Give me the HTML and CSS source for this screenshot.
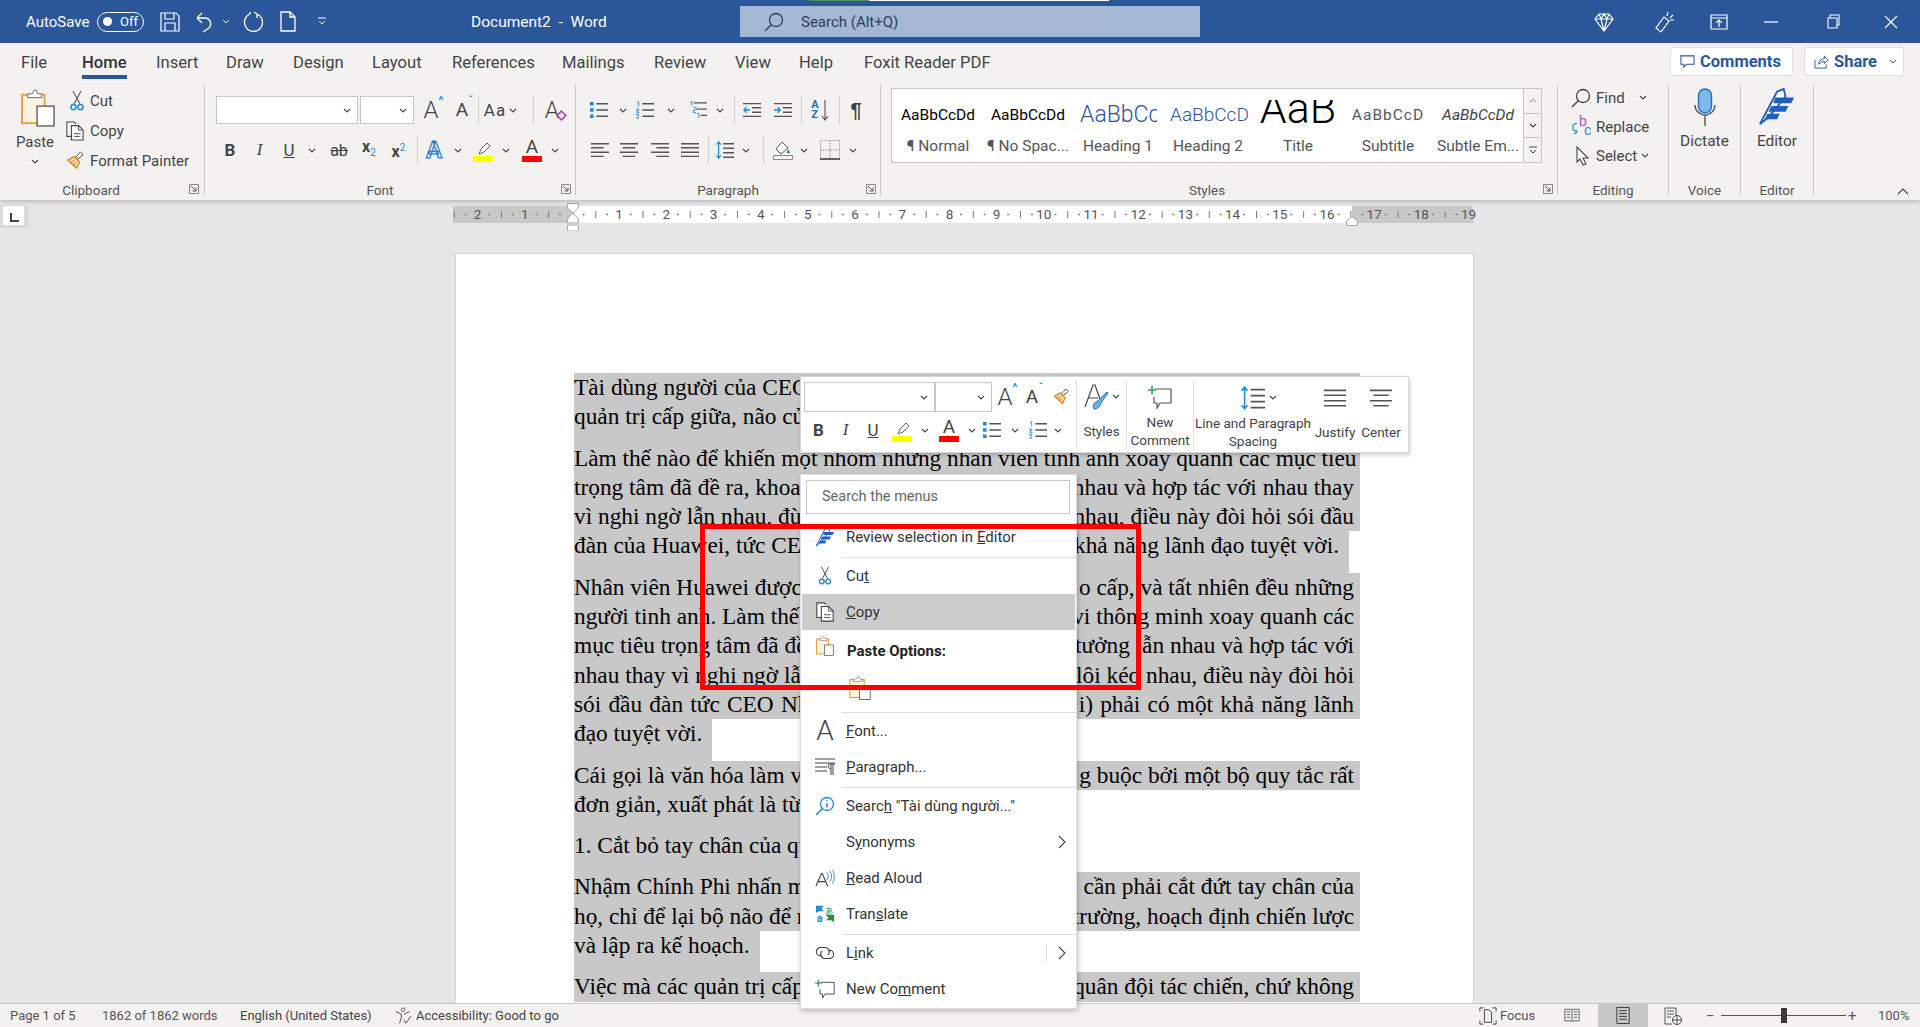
FILE: index.html
```html
<!DOCTYPE html>
<html lang="vi">
<head>
    <meta charset="UTF-8">
    <title>Document2 - Word</title>
    <link rel="stylesheet" href="styles.css">
</head>
<body>
<svg class="sprite" width="0" height="0">
    <symbol id="chev" viewBox="0 0 8 5"><path d="M1 1l3 3 3-3" fill="none" stroke="#444" stroke-width="1.1"/></symbol>
    <symbol id="cut" viewBox="0 0 14 22"><path d="M3 1l7 13M11 1L4 14" fill="none" stroke="#555" stroke-width="1.1"/><circle cx="3.5" cy="17" r="2.6" fill="none" stroke="#2b88c8" stroke-width="1.5"/><circle cx="10.5" cy="17" r="2.6" fill="none" stroke="#2b88c8" stroke-width="1.5"/></symbol>
    <symbol id="copy" viewBox="0 0 20 22"><path d="M7 17H1V1h8l2 2" fill="#fff" stroke="#444" stroke-width="1.2"/><path d="M6 5h8l5 5v11H6z" fill="#fff" stroke="#444" stroke-width="1.2"/><path d="M14 5v5h5M9 14h7M9 17h7" fill="none" stroke="#444"/></symbol>
    <symbol id="painter" viewBox="0 0 20 22"><path d="M11 7l5-6 3 3-6 5z" fill="#fff" stroke="#444"/><path d="M9 6l6 6-3 7-10-9z" fill="#f7d9a8" stroke="#e07b1a" stroke-width="1.4"/><path d="M5 13l4-3M8 16l3-4" stroke="#e07b1a"/></symbol>
    <symbol id="paste" viewBox="0 0 36 40"><rect x="1" y="6" width="24" height="30" fill="#fdf3e0" stroke="#e8a23c" stroke-width="2"/><path d="M7 9V5h5l2-4h2l2 4h4v4z" fill="#fff" stroke="#666"/><rect x="17" y="18" width="18" height="21" fill="#fff" stroke="#555" stroke-width="1.4"/></symbol>
    <symbol id="bullets" viewBox="0 0 20 20"><path d="M7 3h13M7 10h13M7 17h13" stroke="#555" stroke-width="1.6"/><path d="M0 1h4v4H0zM0 8h4v4H0zM0 15h4v4H0z" fill="#1f8ad2"/></symbol>
    <symbol id="numbers" viewBox="0 0 20 20"><path d="M7 3h13M7 10h13M7 17h13" stroke="#555" stroke-width="1.6"/><path d="M1 1h2v5M0 9h3v2H1v2h3M0 15h3l-1 2 1 2H0" fill="none" stroke="#1f8ad2"/></symbol>
    <symbol id="multi" viewBox="0 0 20 20"><path d="M5 2h15M9 9h11M13 16h7" stroke="#555" stroke-width="1.5"/><path d="M1 0h2v5M5 7h3v3H5v3h3M9 14h2v5" fill="none" stroke="#1f8ad2"/></symbol>
    <symbol id="outdent" viewBox="0 0 20 16"><path d="M0 1h20M10 5.500h10M10 10.500h10M0 15h20" stroke="#555" stroke-width="1.4"/><path d="M8 8H1m3-3L1 8l3 3" fill="none" stroke="#1f8ad2" stroke-width="1.4"/></symbol>
    <symbol id="indent" viewBox="0 0 20 16"><path d="M0 1h20M10 5.500h10M10 10.500h10M0 15h20" stroke="#555" stroke-width="1.4"/><path d="M0 8h7M4 5l3 3-3 3" fill="none" stroke="#1f8ad2" stroke-width="1.4"/></symbol>
    <symbol id="a-left" viewBox="0 0 20 16"><path d="M0 1h20M0 5.500h14M0 10.500h20M0 15h14" stroke="#555" stroke-width="1.5"/></symbol>
    <symbol id="a-center" viewBox="0 0 20 16"><path d="M0 1h20M3 5.500h14M0 10.500h20M3 15h14" stroke="#555" stroke-width="1.5"/></symbol>
    <symbol id="a-right" viewBox="0 0 20 16"><path d="M0 1h20M6 5.500h14M0 10.500h20M6 15h14" stroke="#555" stroke-width="1.5"/></symbol>
    <symbol id="a-just" viewBox="0 0 20 16"><path d="M0 1h20M0 5.500h20M0 10.500h20M0 15h20" stroke="#555" stroke-width="1.5"/></symbol>
    <symbol id="spacing" viewBox="0 0 20 20"><path d="M8 3h12M8 8h12M8 13h12M8 18h12" stroke="#555" stroke-width="1.5"/><path d="M3 1v18M0.500 4L3 1l2.500 3M0.500 16L3 19l2.500-3" fill="none" stroke="#1f8ad2" stroke-width="1.3"/></symbol>
    <symbol id="comment" viewBox="0 0 24 24"><path d="M7 4h16v14H12l-3 5v-5H6v-6" fill="none" stroke="#555" stroke-width="1.2"/><path d="M4 1v8M0 5h8" stroke="#2ba14a" stroke-width="1.6"/></symbol>
    <symbol id="search" viewBox="0 0 20 20"><circle cx="12" cy="8" r="6.500" fill="none" stroke="currentColor" stroke-width="1.3"/><path d="M7.500 12.500L1 19" stroke="currentColor" stroke-width="1.5"/></symbol>
    <symbol id="launch" viewBox="0 0 10 10"><path d="M.5.500h9v9h-9z" fill="none" stroke="#888"/><path d="M2 2l5 5M7 3.500V7H3.500" fill="none" stroke="#555"/></symbol>
    <symbol id="quill" viewBox="0 0 40 40"><path d="M2 38L20 4l7-3 2 8-18 22z" fill="#fff" stroke="#1f5fbf" stroke-width="2"/><path d="M18 10h20l-3 6H16zM14 19h18l-3 6H11zM10 27h13l-3 6H7z" fill="#1f5fbf"/></symbol>
</svg>

<div class="app">
    <div class="titlebar">
        <div class="progress"></div>
        <div class="tb-left">
            <span class="autosave">AutoSave</span>
            <span class="toggle"><i></i><b>Off</b></span>
            <svg class="qa-save" viewBox="0 0 20 20"><path d="M1 1h15l3 3v15H1zM5 1v6h9V1M5 19v-8h10v8" fill="none" stroke="#fff" stroke-width="1.2"/></svg>
            <svg class="qa-undo" viewBox="0 0 18 22"><path d="M1 7h9a6 6 0 0 1 3 10l-6 4M1 7l5-5M1 7l5 5" fill="none" stroke="#fff" stroke-width="1.3"/></svg>
            <svg class="qa-chev" viewBox="0 0 8 5"><path d="M1 1l3 3 3-3" fill="none" stroke="#fff"/></svg>
            <svg class="qa-redo" viewBox="0 0 20 20"><path d="M7 2a9 9 0 1 0 7 0M7 2V0M14 2l-3-2M14 2v4" fill="none" stroke="#fff" stroke-width="1.3"/></svg>
            <svg class="qa-new" viewBox="0 0 16 21"><path d="M1 1h9l5 5v14H1zM10 1v5h5" fill="none" stroke="#fff" stroke-width="1.3"/></svg>
            <svg class="qa-more" viewBox="0 0 10 9"><path d="M1 1h8M2 4l3 3 3-3" fill="none" stroke="#fff"/></svg>
            <span class="doc-title">Document2 &nbsp;-&nbsp; Word</span>
        </div>
        <div class="tb-search">
            <svg class="ic-search" viewBox="0 0 20 20"><use href="#search"/></svg>
            <span>Search (Alt+Q)</span>
        </div>
        <div class="tb-right">
            <svg class="tr-gem" viewBox="0 0 20 20"><path d="M5 2h10l4 5-9 12L1 7zM1 7h18M7 7l3 12 3-12M5 2l2 5 3-5 3 5 2-5" fill="none" stroke="#fff" stroke-width="1.2"/></svg>
            <svg class="tr-idea" viewBox="0 0 20 22"><path d="M10 6l5 4-8 11-5-4zM14 1l-1 4M19 4l-3 3M20 9l-4 0" fill="none" stroke="#fff" stroke-width="1.2"/></svg>
            <svg class="tr-disp" viewBox="0 0 18 16"><path d="M1 1h16v14H1zM1 4h16M9 13V7M6 9l3-3 3 3" fill="none" stroke="#fff" stroke-width="1.2"/></svg>
            <svg class="tr-min" viewBox="0 0 14 2"><path d="M0 1h14" stroke="#fff" stroke-width="1.2"/></svg>
            <svg class="tr-max" viewBox="0 0 13 15"><path d="M1 4h9v10H1zM3 4V1h9v10h-2" fill="none" stroke="#fff" stroke-width="1.1"/></svg>
            <svg class="tr-close" viewBox="0 0 14 14"><path d="M1 1l12 12M13 1L1 13" stroke="#fff" stroke-width="1.2"/></svg>
        </div>
    </div>

    <div class="tabs">
        <span>File</span><span class="active">Home</span><span>Insert</span><span>Draw</span><span>Design</span><span>Layout</span><span>References</span><span>Mailings</span><span>Review</span><span>View</span><span>Help</span><span>Foxit Reader PDF</span>
        <div class="tab-actions">
            <button class="pill pill-comments"><svg viewBox="0 0 16 16"><path d="M1 2h14v9H7l-3 3v-3H1z" fill="none" stroke="#2b579a" stroke-width="1.1"/></svg>Comments</button>
            <button class="pill pill-share"><svg viewBox="0 0 16 16"><path d="M1 6v9h12v-4M5 11c0-4 3-6 6-6V2l4 4.500L11 10V8c-2 0-4 1-6 3z" fill="none" stroke="#2b579a" stroke-width="1"/></svg>Share<svg class="pill-chev" viewBox="0 0 8 5"><path d="M1 1l3 3 3-3" fill="none" stroke="#2b579a"/></svg></button>
        </div>
    </div>

    <div class="ribbon">
        <div class="group g-clip">
            <div class="clip-row">
                <div class="paste-btn">
                    <svg class="paste-ic"><use href="#paste"/></svg>
                    <span>Paste</span>
                    <svg class="chev"><use href="#chev"/></svg>
                </div>
                <div class="clip-list">
                    <div><svg class="ci ci-cut"><use href="#cut"/></svg>Cut</div>
                    <div><svg class="ci ci-copy"><use href="#copy"/></svg>Copy</div>
                    <div><svg class="ci ci-copy"><use href="#painter"/></svg>Format Painter</div>
                </div>
            </div>
            <div class="g-label">Clipboard</div>
            <svg class="launch"><use href="#launch"/></svg>
        </div>

        <div class="group g-font">
            <div class="row font-r1">
                <div class="combo combo-name"><svg class="chev"><use href="#chev"/></svg></div>
                <div class="combo combo-size"><svg class="chev"><use href="#chev"/></svg></div>
                <span class="c letter-lg">A<sup class="up">^</sup></span>
                <span class="c letter-md">A<sup class="dn">ˇ</sup></span>
                <i class="sep"></i>
                <span class="c aa">Aa<svg class="chev"><use href="#chev"/></svg></span>
                <i class="sep"></i>
                <span class="c clear">A<svg viewBox="0 0 10 10"><path d="M5 1l4 4-4 4-4-4z" fill="#f1d9f0" stroke="#a23cb0" stroke-width="1.3"/></svg></span>
            </div>
            <div class="row font-r2">
                <span class="c bold">B</span>
                <span class="c ital">I</span>
                <span class="c under">U</span>
                <svg class="chev c"><use href="#chev"/></svg>
                <span class="c strike">ab</span>
                <span class="c subsup">x<sub>2</sub></span>
                <span class="c subsup">x<sup>2</sup></span>
                <i class="sep"></i>
                <span class="c effect">A</span>
                <svg class="chev c"><use href="#chev"/></svg>
                <span class="c swatch"><svg viewBox="0 0 20 14"><path d="M6 12l2-5 6-6 3 3-6 6z" fill="#fff" stroke="#666"/></svg><b class="yellow"></b></span>
                <svg class="chev c"><use href="#chev"/></svg>
                <span class="c swatch letter">A<b class="red"></b></span>
                <svg class="chev c"><use href="#chev"/></svg>
            </div>
            <div class="g-label">Font</div>
            <svg class="launch"><use href="#launch"/></svg>
        </div>

        <div class="group g-para">
            <div class="row para-r1">
                <svg class="c ic18"><use href="#bullets"/></svg>
                <svg class="chev c"><use href="#chev"/></svg>
                <svg class="c ic18"><use href="#numbers"/></svg>
                <svg class="chev c"><use href="#chev"/></svg>
                <svg class="c ic18"><use href="#multi"/></svg>
                <svg class="chev c"><use href="#chev"/></svg>
                <i class="sep"></i>
                <svg class="c ic18"><use href="#outdent"/></svg>
                <svg class="c ic18"><use href="#indent"/></svg>
                <i class="sep"></i>
                <span class="c sort"><span class="az">A<br>Z</span><svg viewBox="0 0 8 22"><path d="M4 1v20M1 17l3 4 3-4" fill="none" stroke="#555" stroke-width="1.1"/></svg></span>
                <i class="sep"></i>
                <span class="c pil">¶</span>
            </div>
            <div class="row para-r2">
                <svg class="c ic18"><use href="#a-left"/></svg>
                <svg class="c ic18"><use href="#a-center"/></svg>
                <svg class="c ic18"><use href="#a-right"/></svg>
                <svg class="c ic18"><use href="#a-just"/></svg>
                <i class="sep"></i>
                <svg class="c ic18"><use href="#spacing"/></svg>
                <svg class="chev c"><use href="#chev"/></svg>
                <i class="sep"></i>
                <svg class="c shade" viewBox="0 0 20 20"><path d="M3 9l6-7 6 6-7 6z" fill="#fff" stroke="#555"/><path d="M15 9l2 4h-3z" fill="#1f5f9f"/><path d="M.5 15.500h19v4H.5z" fill="#f7f7f7" stroke="#888"/></svg>
                <svg class="chev c"><use href="#chev"/></svg>
                <svg class="c shade" viewBox="0 0 20 20"><path d="M.5.500h19v19H.5zM10 1v18M1 10h18" fill="none" stroke="#888" stroke-dasharray="1 1"/><path d="M0 19h20" stroke="#444" stroke-width="1.6"/></svg>
                <svg class="chev c"><use href="#chev"/></svg>
            </div>
            <div class="g-label">Paragraph</div>
            <svg class="launch"><use href="#launch"/></svg>
        </div>

        <div class="group g-styles">
            <div class="gallery">
                <div class="st"><div class="pv pv-n">AaBbCcDd</div><div>¶ Normal</div></div>
                <div class="st"><div class="pv pv-n">AaBbCcDd</div><div>¶ No Spac...</div></div>
                <div class="st"><div class="pv pv-h1">AaBbCcDd</div><div>Heading 1</div></div>
                <div class="st"><div class="pv pv-h2">AaBbCcDd</div><div>Heading 2</div></div>
                <div class="st"><div class="pv pv-t">AaB</div><div>Title</div></div>
                <div class="st"><div class="pv pv-s">AaBbCcD</div><div>Subtitle</div></div>
                <div class="st"><div class="pv pv-e">AaBbCcDd</div><div>Subtle Em...</div></div>
                <div class="scroller">
                    <span><svg class="chev up-c"><use href="#chev"/></svg></span>
                    <span><svg class="chev"><use href="#chev"/></svg></span>
                    <span><svg class="more" viewBox="0 0 10 9"><path d="M1 1h8M2 4l3 3 3-3" fill="none" stroke="#444"/></svg></span>
                </div>
            </div>
            <div class="g-label">Styles</div>
            <svg class="launch"><use href="#launch"/></svg>
        </div>

        <div class="group g-edit">
            <div class="edit-list">
                <div><svg class="ed-ic" viewBox="0 0 20 20"><use href="#search"/></svg>Find<svg class="chev ed-find"><use href="#chev"/></svg></div>
                <div><span class="replace"><b>b</b><i>c</i><svg viewBox="0 0 8 14"><path d="M6 1L2 3v5l4 2M5 8l1 2-3 2" fill="none" stroke="#1f8ad2" stroke-width="1.2"/></svg></span>Replace</div>
                <div><svg class="ed-ic" viewBox="0 0 20 20"><path d="M6 1v15l3-3 3 6 3-1-3-6h5z" fill="#fff" stroke="#444" stroke-width="1.1"/></svg>Select<svg class="chev ed-sel"><use href="#chev"/></svg></div>
            </div>
            <div class="g-label">Editing</div>
        </div>

        <div class="group g-voice">
            <div class="big-btn">
                <svg class="big-ic" viewBox="0 0 28 38"><path d="M4 17a10 10 0 0 0 20 0M14 27v11" fill="none" stroke="#555" stroke-width="1.4"/><rect x="7.500" y="1" width="13" height="24" rx="6.500" fill="#7cb9ea" stroke="#1f6fc0" stroke-width="1.4"/></svg>
                <span>Dictate</span>
            </div>
            <div class="g-label">Voice</div>
        </div>

        <div class="group g-editor">
            <div class="big-btn">
                <svg class="big-ic"><use href="#quill"/></svg>
                <span>Editor</span>
            </div>
            <div class="g-label">Editor</div>
        </div>
        <svg class="collapse" viewBox="0 0 12 7"><path d="M1 6l5-5 5 5" fill="none" stroke="#444" stroke-width="1.1"/></svg>
    </div>

    <div class="doc-area">
        <div class="ruler-row">
            <div class="tab-stop"><span></span></div>
            <div class="ruler">
                <span>2</span><span>1</span><span></span><span>1</span><span>2</span><span>3</span><span>4</span><span>5</span><span>6</span><span>7</span><span>8</span><span>9</span><span>10</span><span>11</span><span>12</span><span>13</span><span>14</span><span>15</span><span>16</span><span>17</span><span>18</span><span>19</span>
                <svg class="mark-l" viewBox="0 0 12 28"><path d="M.5.500h11V5L6 10 .5 5zM6 10l5.500 6v4H.5v-4zM.5 22h11v6H.5z" fill="#fff" stroke="#aaa"/></svg>
                <svg class="mark-r" viewBox="0 0 12 10"><path d="M6 .5l5.500 5v4H.5v-4z" fill="#fff" stroke="#aaa"/></svg>
            </div>
        </div>
        <div class="page">
            <div class="para">
                <div class="ln split"><span>Tài dùng người của CEO Nhậm</span></div>
                <div class="ln split"><span>quản trị cấp giữa, não của</span></div>
                <div class="gap"></div>
            </div>
            <div class="para">
                <div class="ln full">Làm thế nào để khiến một nhóm những nhân viên tinh anh xoay quanh các mục tiêu</div>
                <div class="ln split"><span>trọng tâm đã đề ra, khoan</span><span>nhau và hợp tác với nhau thay</span></div>
                <div class="ln split"><span>vì nghi ngờ lẫn nhau, đừng</span><span>nhau, điều này đòi hỏi sói đầu</span></div>
                <div class="ln split end"><span>đàn của Huawei, tức CEO</span><span>khả năng lãnh đạo tuyệt vời.</span></div>
            </div>
            <div class="para">
                <div class="ln split"><span>Nhân viên Huawei được</span><span>o cấp, và tất nhiên đều những</span></div>
                <div class="ln split"><span>người tinh anh. Làm thế</span><span>vi thông minh xoay quanh các</span></div>
                <div class="ln split"><span>mục tiêu trọng tâm đã đề</span><span>tưởng lẫn nhau và hợp tác với</span></div>
                <div class="ln split"><span>nhau thay vì nghi ngờ lẫn</span><span>lôi kéo nhau, điều này đòi hỏi</span></div>
                <div class="ln split wide"><span>sói đầu đàn tức CEO Nhậm</span><span>i) phải có một khả năng lãnh</span></div>
                <div class="ln short"><span>đạo tuyệt vời.</span></div>
            </div>
            <div class="para">
                <div class="ln split"><span>Cái gọi là văn hóa làm việc</span><span>g buộc bởi một bộ quy tắc rất</span></div>
                <div class="ln short"><span>đơn giản, xuất phát là từ những</span></div>
            </div>
            <div class="para">
                <div class="ln short"><span>1. Cắt bỏ tay chân của quản trị</span></div>
            </div>
            <div class="para">
                <div class="ln split"><span>Nhậm Chính Phi nhấn mạnh</span><span>cần phải cắt đứt tay chân của</span></div>
                <div class="ln split"><span>họ, chỉ để lại bộ não để nhìn</span><span>trường, hoạch định chiến lược</span></div>
                <div class="ln short"><span>và lập ra kế hoạch.</span></div>
            </div>
            <div class="para">
                <div class="ln split"><span>Việc mà các quản trị cấp cao</span><span>quân đội tác chiến, chứ không</span></div>
            </div>
        </div>
    </div>

    <div class="statusbar">
        <span class="s-page">Page 1 of 5</span>
        <span class="s-words">1862 of 1862 words</span>
        <span class="s-lang">English (United States)</span>
        <svg class="s-acc" viewBox="0 0 20 20"><circle cx="9" cy="3" r="2" fill="none" stroke="#555"/><path d="M1 5l6 3v4l-2 6M16 5l-6 3M10 14l2 4 6-8" fill="none" stroke="#555" stroke-width="1.1"/></svg>
        <span class="s-acct">Accessibility: Good to go</span>
        <div class="s-right">
            <svg class="s-focus" viewBox="0 0 20 20"><path d="M1 5V1h4M15 1h4v4M1 15v4h4M15 19h4v-4M6 3h5l3 3v11H6z" fill="none" stroke="#444" stroke-width="1.1"/></svg>
            <span class="s-ftext">Focus</span>
            <svg class="s-read" viewBox="0 0 18 16"><path d="M1 1h7l1 1 1-1h7v13h-7l-1 1-1-1H1zM9 2v12M3 4h4M3 7h4M3 10h4M11 4h4M11 7h4M11 10h4" fill="none" stroke="#555"/></svg>
            <span class="s-print"><svg viewBox="0 0 14 18"><path d="M.5.500h13v17H.5zM3 4h8M3 7h8M3 10h8M3 13h8" fill="none" stroke="#333"/></svg></span>
            <svg class="s-web" viewBox="0 0 18 18"><path d="M8 17H1V1h11v7M3 4h7M3 7h7M3 10h4" fill="none" stroke="#555"/><circle cx="13" cy="13" r="4.500" fill="#fff" stroke="#444"/><path d="M8.500 13h9M13 8.500v9" stroke="#444"/></svg>
            <span class="s-minus">−</span>
            <div class="slider"><i></i></div>
            <span class="s-plus">+</span>
            <span class="s-zoom">100%</span>
        </div>
    </div>

    <!-- floating toolbar -->
    <div class="mini">
        <div class="mini-fmt">
            <div class="mini-r1">
                <div class="combo mc-name"><svg class="chev"><use href="#chev"/></svg></div>
                <div class="combo mc-size"><svg class="chev"><use href="#chev"/></svg></div>
                <span class="c letter-lg">A<sup class="up">^</sup></span>
                <span class="c letter-md">A<sup class="dn">ˇ</sup></span>
                <svg class="c ic18"><use href="#painter"/></svg>
            </div>
            <div class="mini-r2">
                <span class="c bold">B</span>
                <span class="c ital">I</span>
                <span class="c under">U</span>
                <span class="c swatch"><svg viewBox="0 0 20 14"><path d="M6 12l2-5 6-6 3 3-6 6z" fill="#fff" stroke="#666"/></svg><b class="yellow"></b></span>
                <svg class="chev c"><use href="#chev"/></svg>
                <span class="c swatch letter">A<b class="red"></b></span>
                <svg class="chev c"><use href="#chev"/></svg>
                <svg class="c ic18"><use href="#bullets"/></svg>
                <svg class="chev c"><use href="#chev"/></svg>
                <svg class="c ic18"><use href="#numbers"/></svg>
                <svg class="chev c"><use href="#chev"/></svg>
            </div>
        </div>
        <div class="mini-btn mb-styles">
            <div class="mb-ic"><svg class="st-ic" viewBox="0 0 24 28"><path d="M1 24L9 2h2l5 14M5 15h9" fill="none" stroke="#444" stroke-width="1.2"/><path d="M10 26c-2-3 0-7 4-8l9-9 1 1-7 10c-1 4-4 6-7 6z" fill="#6db3e6" stroke="#1f6fc0"/></svg><svg class="chev"><use href="#chev"/></svg></div>
            <span>Styles</span>
        </div>
        <div class="mini-btn mb-comment">
            <div class="mb-ic"><svg class="ic24"><use href="#comment"/></svg></div>
            <span>New<br>Comment</span>
        </div>
        <div class="mini-btn mb-spacing">
            <div class="mb-ic"><svg class="ic24"><use href="#spacing"/></svg><svg class="chev"><use href="#chev"/></svg></div>
            <span>Line and Paragraph<br>Spacing</span>
        </div>
        <div class="mini-btn mb-align">
            <div class="mb-ic"><svg class="ic22"><use href="#a-just"/></svg></div>
            <span>Justify</span>
        </div>
        <div class="mini-btn mb-align">
            <div class="mb-ic"><svg class="ic22"><use href="#a-center"/></svg></div>
            <span>Center</span>
        </div>
    </div>

    <!-- context menu -->
    <div class="menu">
        <div class="menu-search">Search the menus</div>
        <div class="menu-item mi-first"><svg class="mi"><use href="#quill"/></svg><span>Review selection in <u>E</u>ditor</span></div>
        <hr>
        <div class="menu-item"><svg class="mi"><use href="#cut"/></svg><span>Cu<u>t</u></span></div>
        <div class="menu-item hover"><svg class="mi"><use href="#copy"/></svg><span><u>C</u>opy</span></div>
        <div class="menu-item mi-paste"><svg class="mi"><use href="#paste"/></svg><strong>Paste Options:</strong></div>
        <div class="paste-opt"><svg><use href="#paste"/></svg></div>
        <hr>
        <div class="menu-item"><span class="mi mi-font">A</span><span><u>F</u>ont...</span></div>
        <div class="menu-item"><svg class="mi" viewBox="0 0 20 18"><path d="M0 1h20M0 5h20M0 9h12M0 13h12" stroke="#444" stroke-width="1.2"/><path d="M14 6h6M16 6v11M18 6v11M14 6a3 3 0 0 0 2 5" fill="none" stroke="#444"/></svg><span><u>P</u>aragraph...</span></div>
        <hr>
        <div class="menu-item"><svg class="mi" viewBox="0 0 20 20"><circle cx="12" cy="8" r="6.500" fill="none" stroke="#1f8ad2" stroke-width="1.3"/><path d="M7.500 12.500L1 19" stroke="#1f8ad2" stroke-width="1.6"/><path d="M12 4v1M12 7v4.500" stroke="#1f6fc0" stroke-width="1.3"/></svg><span>Searc<u>h</u> "Tài dùng người..."</span></div>
        <div class="menu-item"><i class="mi"></i><span>S<u>y</u>nonyms</span><svg class="arrow" viewBox="0 0 8 14"><path d="M1 1l6 6-6 6" fill="none" stroke="#444" stroke-width="1.1"/></svg></div>
        <div class="menu-item"><svg class="mi" viewBox="0 0 22 20"><path d="M1 19L7 5h1l6 14M3.500 14h8" fill="none" stroke="#444" stroke-width="1.2"/><path d="M14 3c2 2 2 6 0 8M17 1c3 3 3 9 0 12M20 0c3 4 3 11 0 15" fill="none" stroke="#1f8ad2" transform="translate(-1 1)"/></svg><span><u>R</u>ead Aloud</span></div>
        <div class="menu-item"><svg class="mi" viewBox="0 0 22 20"><path d="M1 1h9L7 4l3 3H4L1 9z" fill="#1f8ad2"/><path d="M21 11h-9l3 3-3 3h6l3 2z" fill="#2b8a3e"/><text x="2" y="19" class="t-a">a</text><text x="11" y="10" class="t-b">あ</text></svg><span>Tran<u>s</u>late</span></div>
        <hr>
        <div class="menu-item"><svg class="mi" viewBox="0 0 22 16"><path d="M8 11H6a4.500 4.500 0 0 1 0-9h5a4.500 4.500 0 0 1 3 8M14 5h2a4.500 4.500 0 0 1 0 9h-5a4.500 4.500 0 0 1-3-8" fill="none" stroke="#444" stroke-width="1.2"/></svg><span>L<u>i</u>nk</span><i class="arrow-sep"></i><svg class="arrow" viewBox="0 0 8 14"><path d="M1 1l6 6-6 6" fill="none" stroke="#444" stroke-width="1.1"/></svg></div>
        <div class="menu-item"><svg class="mi"><use href="#comment"/></svg><span>New Co<u>m</u>ment</span></div>
    </div>

    <div class="redbox"></div>
</div>
</body>
</html>
```

FILE: styles.css
```css
* {
    box-sizing: border-box;
    margin: 0;
    padding: 0;
}

body {
    font-family: Roboto, "Open Sans", sans-serif;
    font-size: 15px;
    color: #444;
    background: #e6e6e6;
    overflow: hidden;
}

.sprite {
    position: absolute;
}

svg {
    display: block;
    flex: none;
}

.app {
    position: relative;
    width: 1920px;
    height: 1027px;
    display: flex;
    flex-direction: column;
    overflow: hidden;
}

/* title bar */
.titlebar {
    position: relative;
    height: 43px;
    flex: none;
    display: flex;
    align-items: center;
    background: #2b579a;
    color: #fff;
}

.progress {
    position: absolute;
    top: 0;
    left: 809px;
    width: 300px;
    height: 1px;
    background: linear-gradient(to right, #5c8f5c 60px, #fff 60px);
}

.tb-left {
    width: 740px;
    display: flex;
    align-items: center;
    padding-left: 26px;
}

.autosave {
    width: 71px;
    font-size: 15px;
}

.toggle {
    width: 47px;
    height: 20px;
    border: 1px solid #fff;
    border-radius: 10px;
    display: flex;
    align-items: center;
    padding: 0 5px;
    justify-content: space-between;
}

.toggle i {
    width: 9px;
    height: 9px;
    border-radius: 50%;
    background: #fff;
}

.toggle b {
    font-weight: 400;
    font-size: 13px;
}

.qa-save { width: 20px; height: 20px; margin-left: 16px; }
.qa-undo { width: 18px; height: 22px; margin-left: 16px; }
.qa-chev { width: 8px; height: 5px; margin-left: 8px; }
.qa-redo { width: 20px; height: 20px; margin-left: 13px; }
.qa-new { width: 16px; height: 21px; margin-left: 17px; }
.qa-more { width: 10px; height: 9px; margin-left: 21px; }

.doc-title {
    margin-left: 144px;
    font-size: 15.5px;
    white-space: nowrap;
}

.tb-search {
    width: 460px;
    height: 31px;
    display: flex;
    align-items: center;
    background: #a5b8d3;
    color: #2b3f5c;
    font-size: 15px;
}

.ic-search {
    width: 20px;
    height: 20px;
    margin: 0 17px 0 24px;
    color: #2b3f5c;
}

.tb-right {
    flex: 1;
    display: flex;
    align-items: center;
}

.tr-gem { width: 20px; height: 20px; margin-left: 394px; }
.tr-idea { width: 20px; height: 22px; margin-left: 40px; }
.tr-disp { width: 18px; height: 16px; margin-left: 36px; }
.tr-min { width: 14px; height: 2px; margin-left: 36px; }
.tr-max { width: 13px; height: 15px; margin-left: 49px; }
.tr-close { width: 14px; height: 14px; margin-left: 44px; }

/* tabs */
.tabs {
    height: 42px;
    flex: none;
    display: grid;
    grid-template-columns: 61px 74px 70px 67px 79px 80px 110px 92px 81px 64px 65px 130px 1fr;
    align-items: center;
    padding-left: 21px;
    background: #f3f2f1;
    font-size: 16.6px;
    color: #444;
}

.tabs span {
    height: 42px;
    line-height: 39px;
    white-space: nowrap;
}

.tabs .active {
    justify-self: start;
    font-weight: 500;
    color: #333;
    position: relative;
}

.tabs .active::after {
    content: "";
    position: absolute;
    left: 0;
    right: 0;
    top: 32px;
    height: 4px;
    background: #2b579a;
}

.tab-actions {
    align-self: start;
    display: flex;
    justify-content: flex-end;
    gap: 11px;
    margin-top: 4px;
    padding-right: 16px;
}

.pill {
    height: 29px;
    display: flex;
    align-items: center;
    background: #fff;
    border: 1px solid #e1dfdd;
    border-radius: 3px;
    font: 700 16.500px Roboto, sans-serif;
    color: #2b579a;
}

.pill svg {
    width: 15px;
    height: 15px;
    margin-right: 5px;
}

.pill-comments {
    width: 123px;
    padding-left: 9px;
}

.pill-share {
    width: 100px;
    padding-left: 9px;
}

.pill .pill-chev {
    width: 8px;
    height: 5px;
    margin: 0 0 0 12px;
}

/* ribbon */
.ribbon {
    position: relative;
    z-index: 1;
    height: 115px;
    flex: none;
    display: flex;
    background: #f3f2f1;
    box-shadow: 0 2px 4px rgba(0, 0, 0, 0.18);
}

.group {
    position: relative;
    height: 110px;
    flex: none;
    display: flex;
    flex-direction: column;
    border-right: 1px solid #c8c6c4;
}

.g-clip { width: 205px; }
.g-font { width: 371px; padding: 11px 0 0 10px; }
.g-para { width: 305px; padding: 11px 0 0 9px; }
.g-styles { width: 677px; padding: 3px 0 0 10px; }
.g-edit { width: 111px; }
.g-voice { width: 72px; }
.g-editor { width: 73px; }

.g-label {
    position: absolute;
    left: 0;
    right: 0;
    bottom: -1px;
    height: 12px;
    line-height: 12px;
    font-size: 13.5px;
    text-align: center;
    color: #555;
}

.g-clip .g-label { right: 22px; }
.g-font .g-label { right: 20px; }
.g-styles .g-label { right: 24px; }

.launch {
    position: absolute;
    right: 4px;
    bottom: 1px;
    width: 10px;
    height: 10px;
}

.g-clip .launch { right: 5px; }

.chev {
    width: 8px;
    height: 5px;
}

.c {
    justify-self: center;
    align-self: center;
}

.clip-row {
    display: flex;
    padding-top: 1px;
}

.paste-btn {
    width: 70px;
    display: flex;
    flex-direction: column;
    align-items: center;
    padding-top: 3px;
}

.paste-ic {
    width: 34px;
    height: 38px;
    margin: 0 0 5px 6px;
}

.paste-btn span {
    line-height: 20px;
}

.paste-btn .chev {
    margin-top: 7px;
}

.clip-list {
    display: flex;
    flex-direction: column;
    white-space: nowrap;
}

.clip-list div {
    height: 30px;
    display: flex;
    align-items: center;
    margin-left: -4px;
}

.ci {
    margin-right: 6px;
}

.ci-cut {
    width: 14px;
    height: 22px;
    margin-left: 4px;
}

.ci-copy {
    width: 18px;
    height: 20px;
}

.row {
    display: grid;
    height: 28px;
    align-items: center;
    justify-items: center;
}

.font-r1 {
    grid-template-columns: 142px 56px 34px 28px 4px 41px 24px 14px;
    margin-bottom: 12px;
    justify-content: start;
    margin-left: 1px;
}

.font-r2 {
    grid-template-columns: 30px 29px 30px 16px 38px 22px 37px 1px 32px 16px 34px 12px 40px 6px;
    justify-content: start;
}

.para-r1 {
    grid-template-columns: 26px 22px 22px 30px 24px 20px 8px 28px 34px 2px 36px 2px 32px;
    margin-bottom: 12px;
    justify-content: start;
    margin-left: 1px;
}

.para-r2 {
    grid-template-columns: 28px 30px 31px 30px 6px 28px 14px 20px 20px 22px 30px 16px;
    justify-content: start;
    margin-left: 1px;
}

.combo {
    height: 28px;
    background: #fff;
    border: 1px solid #c8c6c4;
    display: flex;
    align-items: center;
    justify-content: flex-end;
    padding-right: 6px;
}

.combo-name { width: 142px; }
.combo-size { width: 54px; justify-self: end; }

.sep {
    display: block;
    width: 1px;
    height: 28px;
    background: #d2d0ce;
}

.letter-lg {
    position: relative;
    font-size: 24px;
    font-weight: 300;
    color: #444;
    line-height: 28px;
}

.letter-md {
    position: relative;
    font-size: 19px;
    color: #444;
    line-height: 28px;
}

.letter-lg sup, .letter-md sup {
    position: absolute;
    left: 100%;
    top: -2px;
    font-size: 11px;
    line-height: 14px;
    color: #1f8ad2;
    font-weight: 700;
}

.aa {
    font-size: 17px;
    display: flex;
    align-items: center;
    gap: 3px;
    letter-spacing: 1px;
}

.clear {
    position: relative;
    font-size: 23px;
    font-weight: 300;
}

.clear svg {
    position: absolute;
    right: -8px;
    bottom: 3px;
    width: 11px;
    height: 11px;
}

.bold { font-weight: 700; font-size: 17px; color: #444; }
.ital { font-style: italic; font-size: 17px; font-family: "Liberation Serif", serif; }
.under { text-decoration: underline; font-size: 17px; }
.strike { text-decoration: line-through; font-size: 16px; }
.subsup { font-weight: 700; font-size: 16px; line-height: 20px; }
.subsup sub, .subsup sup { font-size: 10px; color: #1f8ad2; font-weight: 400; }

.effect {
    font-size: 24px;
    font-weight: 700;
    color: #cfe6fa;
    -webkit-text-stroke: 1px #1f6fc0;
    line-height: 26px;
}

.swatch {
    width: 20px;
    height: 24px;
    display: flex;
    flex-direction: column;
    align-items: center;
    justify-content: flex-end;
}

.swatch svg {
    width: 20px;
    height: 14px;
}

.swatch b {
    width: 20px;
    height: 6px;
    flex: none;
}

.swatch.letter {
    font-size: 19px;
    line-height: 18px;
}

.yellow { background: #ffff00; }
.red { background: #f00; }

.ic18 {
    width: 18px;
    height: 18px;
}

.shade {
    width: 20px;
    height: 20px;
}

.sort {
    display: flex;
    align-items: center;
    gap: 2px;
}

.sort svg {
    width: 8px;
    height: 22px;
}

.az {
    font-size: 11px;
    line-height: 10px;
    font-weight: 700;
    color: #1f6fc0;
}

.pil {
    font-size: 20px;
    font-weight: 700;
    color: #444;
    font-family: "Liberation Sans", sans-serif;
}

/* styles gallery */
.gallery {
    width: 651px;
    height: 75px;
    display: flex;
    background: #fff;
    border: 1px solid #c8c6c4;
    padding-left: 1px;
}

.st {
    width: 90px;
    flex: none;
    text-align: center;
    white-space: nowrap;
    overflow: hidden;
    color: #555;
    font-size: 15.5px;
}

.pv {
    height: 47px;
    line-height: 52px;
    color: #000;
    overflow: hidden;
    padding: 0 6px;
}

.st > div:last-child {
    line-height: 20px;
}

.pv-n { font-size: 15.5px; }
.pv-h1 { font-size: 23px; color: #2f5496; font-weight: 300; text-align: left; padding-left: 7px; margin-right: 6px; }
.pv-h2 { font-size: 19px; color: #2f5496; font-weight: 300; text-align: left; padding-left: 7px; margin-right: 4px; }
.pv-t { height: 36px; margin-top: 11px; font-size: 43px; font-weight: 300; line-height: 16px; }
.pv-s { font-size: 15.5px; color: #595959; letter-spacing: 1px; }
.pv-e { font-size: 15.5px; font-style: italic; color: #404040; }

.scroller {
    width: 19px;
    margin-left: auto;
    display: flex;
    flex-direction: column;
    border-left: 1px solid #c8c6c4;
    background: #f3f2f1;
}

.scroller span {
    flex: 1;
    display: flex;
    align-items: center;
    justify-content: center;
    border-bottom: 1px solid #c8c6c4;
}

.scroller span:last-child {
    border-bottom: none;
}

.scroller .up-c {
    transform: rotate(180deg);
    opacity: 0.4;
}

.scroller .more {
    width: 10px;
    height: 9px;
}

/* editing */
.edit-list {
    padding: 0 0 0 13px;
    white-space: nowrap;
}

.edit-list div {
    height: 29px;
    display: flex;
    align-items: center;
    position: relative;
    top: -2px;
}

.ed-ic {
    width: 20px;
    height: 20px;
    margin-right: 5px;
    color: #444;
}

.ed-find { margin-left: 14px; }
.ed-sel { margin-left: 4px; }

.replace {
    position: relative;
    width: 20px;
    height: 20px;
    margin-right: 5px;
}

.replace svg {
    position: absolute;
    left: 0;
    top: 5px;
    width: 8px;
    height: 14px;
}

.replace b {
    position: absolute;
    left: 8px;
    top: -4px;
    color: #b04fc4;
    font-weight: 400;
    font-size: 14px;
}

.replace i {
    position: absolute;
    left: 13px;
    top: 5px;
    color: #1f8ad2;
    font-style: normal;
    font-size: 14px;
}

.big-btn {
    display: flex;
    flex-direction: column;
    align-items: center;
    padding-top: 3px;
}

.big-ic {
    width: 40px;
    height: 38px;
    margin-bottom: 5px;
}

.big-btn span {
    line-height: 20px;
    font-size: 15.5px;
}

.collapse {
    position: absolute;
    left: 1897px;
    top: 103px;
    width: 12px;
    height: 7px;
}

/* document */
.doc-area {
    flex: 1;
    min-height: 0;
    overflow: hidden;
    background: #e6e6e6;
}

.ruler-row {
    display: flex;
    padding-top: 5px;
    height: 53px;
}

.tab-stop {
    width: 29px;
    height: 23px;
    margin-right: 424px;
    padding: 1px 5px 3px 3px;
    background: #dadada;
}

.tab-stop span {
    display: block;
    width: 100%;
    height: 100%;
    background: #fff;
    position: relative;
}

.tab-stop span::after {
    content: "";
    position: absolute;
    left: 7px;
    top: 7px;
    width: 7px;
    height: 7px;
    border-left: 2px solid #444;
    border-bottom: 2px solid #444;
}

.ruler {
    position: relative;
    width: 1020px;
    height: 17px;
    margin-top: 1px;
    display: flex;
    background:
        radial-gradient(circle at 11.800px 8.500px, #777 0.8px, transparent 1.2px) 0.800px 0 / 23.600px 17px repeat-x,
        linear-gradient(to right, #777 1px, transparent 1px) 0.800px 5px / 47.200px 7px repeat-x,
        linear-gradient(to right, #c8c8c8 120px, #fff 120px, #fff 899px, #c8c8c8 899px);
}

.ruler span {
    width: 47.2px;
    flex: none;
    text-align: center;
    font-size: 13.5px;
    line-height: 17px;
    color: #555;
    position: relative;
    left: 1px;
}

.mark-l {
    position: absolute;
    left: 114px;
    top: -3px;
    width: 12px;
    height: 28px;
}

.mark-r {
    position: absolute;
    left: 893px;
    top: 10px;
    width: 12px;
    height: 10px;
}

.page {
    width: 1019px;
    height: 800px;
    margin-left: 455px;
    padding: 119px 113px 0 118px;
    background: #fff;
    border: 1px solid #d2d0ce;
    font-family: "Liberation Serif", serif;
    font-size: 23.33px;
    line-height: 29.3px;
    color: #000;
}

.para {
    background: #c8c8c8;
}

.ln {
    height: 29.3px;
    white-space: nowrap;
    padding-right: 6px;
}

.gap {
    height: 12px;
}

.full {
    word-spacing: -0.15px;
}

.split {
    display: flex;
    justify-content: space-between;
}

.wide {
    word-spacing: 1.4px;
}

.end {
    height: 41.300px;
    padding-right: 10px;
    border-right: 11px solid #fff;
}

.short {
    height: 41.300px;
    padding-right: 0;
    background: #fff;
}

.short span {
    display: inline-block;
    height: 41.300px;
    background: #c8c8c8;
    padding-right: 10px;
}

/* status bar */
.statusbar {
    position: relative;
    z-index: 1;
    height: 24px;
    flex: none;
    display: flex;
    align-items: center;
    background: #f3f2f1;
    border-top: 1px solid #c8c6c4;
    font-size: 13px;
    color: #555;
    white-space: nowrap;
}

.s-page { margin-left: 10px; width: 92px; }
.s-words { width: 138px; }
.s-lang { width: 155px; color: #444; }
.s-acc { width: 18px; height: 18px; margin-right: 3px; }
.s-acct { color: #444; }

.s-right {
    margin-left: auto;
    display: flex;
    align-items: center;
    height: 100%;
}

.s-focus { width: 18px; height: 18px; margin-right: 3px; }
.s-ftext { width: 64px; }
.s-read { width: 16px; height: 15px; }

.s-print {
    width: 50px;
    height: 23px;
    margin: 0 16px 0 18px;
    background: #c8c8c8;
    display: flex;
    align-items: center;
    justify-content: center;
}

.s-print svg {
    width: 14px;
    height: 17px;
}

.s-web { width: 18px; height: 18px; margin-right: 24px; }
.s-minus { width: 15px; font-size: 15px; }

.slider {
    position: relative;
    width: 125px;
    height: 1px;
    background: #555;
}

.slider i {
    position: absolute;
    left: 60px;
    top: -7px;
    width: 6px;
    height: 15px;
    background: #3b3a39;
}

.s-plus { width: 30px; margin-left: 2px; font-size: 15px; }
.s-zoom { width: 42px; }

/* floating toolbar */
.mini {
    position: absolute;
    z-index: 3;
    left: 800px;
    top: 376px;
    width: 609px;
    height: 77px;
    display: flex;
    background: #fff;
    border: 1px solid #d8d8d8;
    box-shadow: 1px 2px 4px rgba(0, 0, 0, 0.2);
    font-size: 13.5px;
}

.mini-fmt {
    width: 276px;
    flex: none;
    padding: 5px 0 0 3px;
    border-right: 1px solid #e3e3e3;
    margin: 3px 0;
}

.mini-r1 {
    display: grid;
    grid-template-columns: 131px 57px 26px 28px 30px;
    height: 30px;
    margin-top: -3px;
    align-items: center;
    justify-items: center;
}

.mini-r2 {
    display: grid;
    grid-template-columns: 27px 27px 28px 29px 18px 30px 16px 24px 22px 24px 16px;
    height: 30px;
    margin-top: 3px;
    padding-left: 1px;
    align-items: center;
    justify-items: center;
}

.mc-name { width: 131px; height: 30px; border-color: #c8c6c4; }
.mc-size { width: 57px; height: 30px; }

.mini-btn {
    flex: none;
    display: flex;
    flex-direction: column;
    align-items: center;
    text-align: center;
    line-height: 18px;
    color: #444;
    white-space: nowrap;
}

.mini-btn > span {
    height: 36px;
    display: flex;
    align-items: center;
    margin-top: 1px;
}

.mb-ic {
    height: 36px;
    display: flex;
    align-items: center;
    gap: 4px;
    padding-top: 5px;
}

.mb-styles { width: 50px; border-right: 1px solid #e3e3e3; margin: 3px 0; }
.mb-comment { width: 67px; border-right: 1px solid #e3e3e3; margin: 3px 0; }
.mb-spacing { width: 118px; }
.mb-align { width: 46px; }

.mb-styles .mb-ic { height: 33px; padding-top: 1px; }
.mb-comment .mb-ic { height: 33px; padding-top: 1px; }
.mb-comment > span { margin-top: 1px; }
.mb-spacing .mb-ic { padding-left: 12px; }
.st-ic { width: 24px; height: 28px; }
.ic24 { width: 24px; height: 24px; }
.ic22 { width: 22px; height: 20px; }

/* context menu */
.menu {
    position: absolute;
    z-index: 3;
    left: 800px;
    top: 474px;
    width: 277px;
    height: 535px;
    background: #fff;
    border: 1px solid #e0e0e0;
    box-shadow: 1px 2px 5px rgba(0, 0, 0, 0.25);
    padding-top: 5px;
    color: #333;
}

.menu-search {
    width: 264px;
    height: 34px;
    margin: 0 0 0 5px;
    padding-left: 15px;
    line-height: 31px;
    border: 1px solid #c8c6c4;
    color: #666;
    font-size: 14.5px;
}

.menu-item {
    position: relative;
    height: 36px;
    display: flex;
    align-items: center;
    font-size: 15px;
}

.mi-first {
    margin-top: 5px;
}

.mi {
    position: relative;
    width: 20px;
    height: 20px;
    margin: 0 11px 0 14px;
    display: block;
    flex: none;
}

.mi-font {
    font-size: 28px;
    font-weight: 300;
    line-height: 20px;
    text-align: center;
    color: #444;
}

.t-a { font: 700 12px Roboto, sans-serif; fill: #1f8ad2; }
.t-b { font: 400 9px "Noto Sans CJK JP", sans-serif; fill: #2b8a3e; }

.hover {
    background: #cccccc;
    margin: 0 1px;
}

.hover .mi {
    margin-left: 13px;
}

.mi-paste {
    height: 40px;
    align-items: flex-start;
    padding-top: 6px;
}

.mi-paste strong {
    font-weight: 700;
    padding-top: 6px;
    margin-left: 1px;
    color: #222;
}

.paste-opt {
    height: 40px;
    padding: 6px 0 0 48px;
}

.paste-opt svg {
    width: 22px;
    height: 24px;
}

.menu hr {
    height: 1px;
    border: none;
    background: #e1dfdd;
    margin: 2px 0 0 41px;
}

.arrow {
    position: absolute;
    right: 10px;
    top: 11px;
    width: 8px;
    height: 14px;
}

.arrow-sep {
    position: absolute;
    right: 29px;
    top: 9px;
    width: 1px;
    height: 18px;
    background: #e1dfdd;
}

.redbox {
    position: absolute;
    z-index: 4;
    left: 700px;
    top: 524px;
    width: 441px;
    height: 166px;
    border: 5px solid #f00;
}
```
